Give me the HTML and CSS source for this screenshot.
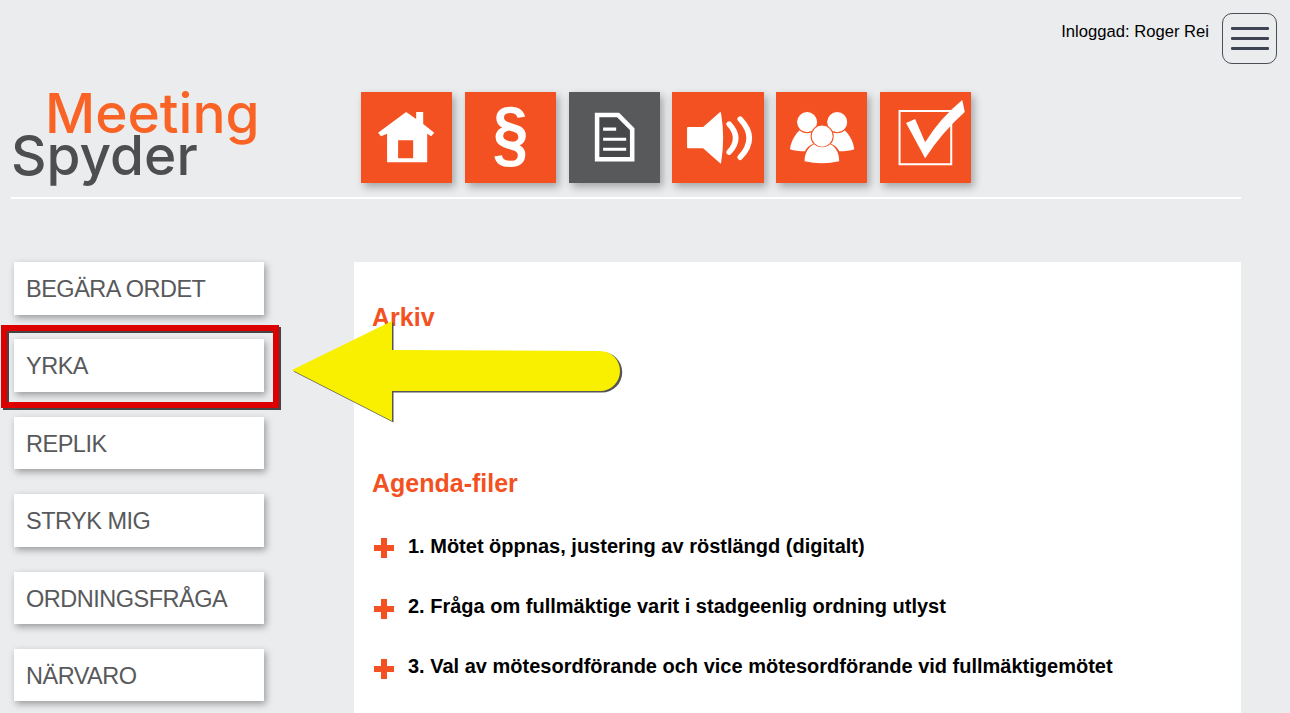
FILE: index.html
```html
<!DOCTYPE html>
<html>
<head>
    <title>Meeting Spyder</title>
    <link rel="stylesheet" href="styles.css">
</head>
<body>
    <div class="topbar">
        <span class="user">Inloggad: Roger Rei</span>
        <button class="menu-btn"><span></span><span></span><span></span></button>
    </div>

    <div class="header">
        <div class="logo">
            <div class="logo-meeting">Meeting</div>
            <div class="logo-spyder">Spyder</div>
        </div>
        <div class="tiles">
            <div class="tile">
                <svg viewBox="0 0 91 91"><path fill="#fff" fill-rule="evenodd" d="M45 20L55 27V20H62V32L73 40.500L70 44L66 41.500V70H26V41.500L20 44L17 40.500ZM37 48V66H52V48Z"/></svg>
            </div>
            <div class="tile tile-glyph"><span>§</span></div>
            <div class="tile tile-active">
                <svg viewBox="0 0 91 91">
                    <path fill="#47484a" stroke="#fff" stroke-width="4.500" d="M28 23H49L63 37V67H28Z"/>
                    <path stroke="#fff" stroke-width="3" d="M34 37H47M34 47H57M34 57H57"/>
                </svg>
            </div>
            <div class="tile">
                <svg viewBox="0 0 91 91">
                    <path fill="#fff" d="M15 36Q15 35 16 35H31L48 20Q49 20 49 22Q53 46 49 70Q49 72 48 71L31 56H16Q15 56 15 55Z"/>
                    <path fill="none" stroke="#fff" stroke-width="5.500" stroke-linecap="round" d="M57 32Q70 46 57 60M68 27Q86 46 68 65"/>
                </svg>
            </div>
            <div class="tile">
                <svg viewBox="0 0 91 91">
                    <g fill="#fff">
                        <path d="M14 57C15 49 19 42 25 37H40L44 50C36 51 31 54 29 59Q20 59 14 57Z"/>
                        <path d="M78 57C77 49 73 42 67 37H52L48 50C56 51 61 54 63 59Q72 59 78 57Z"/>
                    </g>
                    <g fill="#fff" stroke="#f45122" stroke-width="1">
                        <circle cx="31" cy="30" r="10.500"/>
                        <circle cx="61" cy="30" r="10.500"/>
                        <circle cx="46" cy="44" r="11"/>
                    </g>
                    <path fill="#fff" d="M28.500 69C28.500 60 33 54 38 52C42 56 50 56 54 52C59 54 63 60 63 69Q46 73 28.500 69Z"/>
                </svg>
            </div>
            <div class="tile">
                <svg viewBox="0 0 91 91">
                    <path fill="none" stroke="#fff" stroke-width="2" d="M19.500 19H71V72H19.500Z"/>
                    <path fill="#fff" d="M26 31L35 27L45 50Q60 26 82 8L84.500 20Q62 40 45 66Z"/>
                </svg>
            </div>
        </div>
    </div>

    <div class="main">
        <div class="sidebar">
            <a class="side-btn">BEGÄRA ORDET</a>
            <a class="side-btn">YRKA</a>
            <a class="side-btn">REPLIK</a>
            <a class="side-btn">STRYK MIG</a>
            <a class="side-btn">ORDNINGSFRÅGA</a>
            <a class="side-btn">NÄRVARO</a>
        </div>
        <div class="content">
            <h2 class="title-arkiv">Arkiv</h2>
            <h2 class="title-agenda">Agenda-filer</h2>
            <div class="agenda-row"><span class="plus"></span>1. Mötet öppnas, justering av röstlängd (digitalt)</div>
            <div class="agenda-row"><span class="plus"></span>2. Fråga om fullmäktige varit i stadgeenlig ordning utlyst</div>
            <div class="agenda-row"><span class="plus"></span>3. Val av mötesordförande och vice mötesordförande vid fullmäktigemötet</div>
        </div>
    </div>

    <!-- annotations on top of the page -->
    <div class="red-box"></div>
    <svg class="arrow" viewBox="0 0 340 110" width="340" height="110">
        <path fill="#555" d="M8.500 56.500L108.500 7.500V37H317A20 20 0 0 1 317 77.500H108.500V107.500Z"/>
        <path fill="#f9f000" d="M7 55L107 6V35L315 36A20 20 0 0 1 315 76L107 76V106Z"/>
    </svg>
</body>
</html>
```

FILE: styles.css
```css
html, body {
    margin: 0;
    height: 100%;
}

body {
    position: relative;
    height: 100vh;
    overflow: hidden;
    display: flex;
    flex-direction: column;
    background-color: #ebecee;
    font-family: "Liberation Sans", Arial, sans-serif;
}

.topbar {
    display: flex;
    justify-content: flex-end;
    align-items: flex-start;
    gap: 13px;
    padding: 13px 13px 0 0;
}

.user {
    margin-top: 9px;
    font-size: 16.640px;
    color: #000;
}

.menu-btn {
    display: flex;
    flex-direction: column;
    justify-content: center;
    align-items: center;
    gap: 7px;
    width: 55px;
    height: 51px;
    padding: 0;
    background: transparent;
    border: 1px solid #4a4d55;
    border-radius: 10px;
}

.menu-btn span {
    display: block;
    width: 38px;
    height: 3px;
    border-radius: 1px;
    background-color: #3e4454;
}

.header {
    display: flex;
    margin: 28px 49px 0 11px;
    padding-bottom: 14px;
    border-bottom: 2px solid #fff;
}

.logo {
    width: 350px;
    font-family: Inter, sans-serif;
    font-size: 55px;
    font-weight: 500;
    line-height: 42px;
}

.logo-meeting {
    padding-left: 34px;
    color: #f96325;
}

.logo-spyder {
    color: #4d4e50;
}

.tiles {
    display: flex;
    gap: 12.500px;
}

.tile {
    width: 91.300px;
    height: 91px;
    background-color: #f45122;
    box-shadow: 3px 4px 8px rgba(0, 0, 0, 0.3);
}

.tile svg {
    display: block;
}

.tile-active {
    background-color: #58595b;
}

.tile-glyph {
    color: #fff;
    font-size: 64px;
    font-weight: bold;
    line-height: 84px;
    text-align: center;
}

.tile-glyph span {
    display: inline-block;
    transform: scaleY(1.15);
}

.main {
    flex: 1;
    display: flex;
    gap: 90px;
    margin: 63px 49px 0 14px;
}

.sidebar {
    display: flex;
    flex-direction: column;
    gap: 24.900px;
    width: 250px;
}

.side-btn {
    height: 52.500px;
    padding-left: 12px;
    line-height: 54px;
    font-size: 23.500px;
    letter-spacing: -0.5px;
    color: #58595b;
    background-color: #fff;
    box-shadow: 2px 3px 7px rgba(0, 0, 0, 0.35);
}

.content {
    flex: 1;
    padding: 0 18px;
    background-color: #fff;
}

.content h2 {
    margin: 0;
    font-size: 25px;
    color: #f45122;
}

.title-arkiv {
    padding-top: 41px;
}

.title-agenda {
    padding-top: 137px;
    margin-bottom: 18px !important;
}

.agenda-row {
    display: flex;
    align-items: center;
    gap: 14px;
    height: 60.400px;
    font-size: 20px;
    font-weight: bold;
    color: #000;
}

.plus {
    width: 20px;
    height: 20px;
    margin: 4px 0 0 2px;
    background:
        linear-gradient(#f45122, #f45122) center / 20px 6px no-repeat,
        linear-gradient(#f45122, #f45122) center / 6px 20px no-repeat;
}

.red-box {
    position: absolute;
    left: 1px;
    top: 325px;
    width: 278px;
    height: 83px;
    box-sizing: border-box;
    border: 6px solid #dd0000;
    box-shadow: 2px 2px 0 #444, inset 2px 2px 0 #444;
}

.arrow {
    position: absolute;
    left: 285px;
    top: 315px;
}
```
